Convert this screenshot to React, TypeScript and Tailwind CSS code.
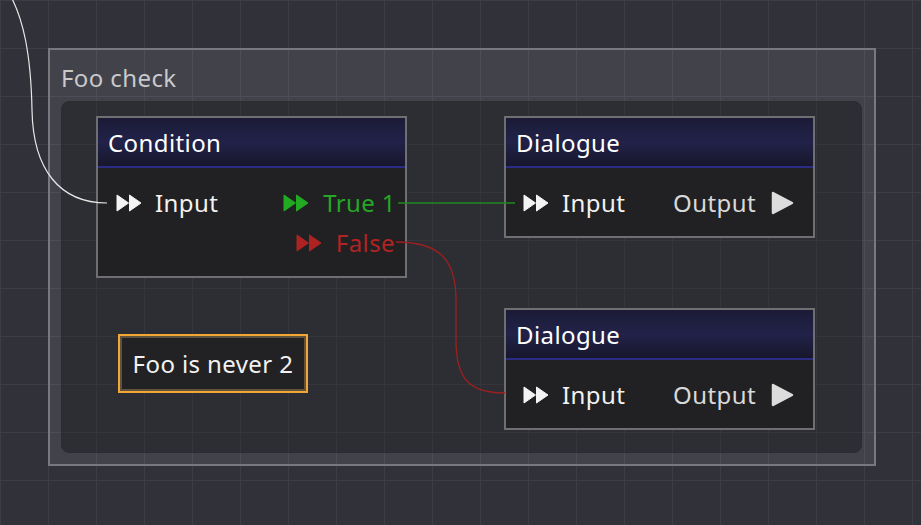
import React from "react";

type Tone = "white" | "green" | "red";

const toneText: Record<Tone, string> = {
  white: "text-[#f2f2f2]",
  green: "text-[#26a626]",
  red: "text-[#b02424]",
};

const toneFill: Record<Tone, string> = {
  white: "#f4f4f4",
  green: "#22aa22",
  red: "#ad2323",
};

function FastIcon({ tone }: { tone: Tone }) {
  return (
    <svg width="26" height="18" viewBox="0 0 26 18" className="shrink-0">
      <path d="M1 1 L12.5 9 L1 17 Z M13.5 1 L25 9 L13.5 17 Z" fill={toneFill[tone]} strokeLinejoin="round" stroke={toneFill[tone]} strokeWidth="1" />
    </svg>
  );
}

function PlayIcon() {
  return (
    <svg width="23" height="24" viewBox="0 0 23 24" className="shrink-0">
      <path d="M2 2 L21 12 L2 22 Z" fill="#dddddd" stroke="#dddddd" strokeWidth="2.5" strokeLinejoin="round" />
    </svg>
  );
}

function Header({ title }: { title: string }) {
  return (
    <div className="h-[50px] flex items-center pl-[10px] pt-[2px] border-b-2 border-[#2c2c86] bg-[linear-gradient(to_bottom,#1b1b36_0%,#22224a_50%,#1d1d3c_72%,#17172c_100%)] text-white">
      {title}
    </div>
  );
}

function InPort() {
  return (
    <div className="flex items-center gap-[13px]">
      <FastIcon tone="white" />
      <span className="text-[#f2f2f2]">Input</span>
    </div>
  );
}

function Dialogue({ className }: { className: string }) {
  return (
    <div className={`absolute w-[311px] border-2 border-[#6f6f73] bg-[#212123] ${className}`}>
      <Header title="Dialogue" />
      <div className="pt-[15px] pb-[13px]">
        <div className="h-10 flex items-center justify-between pl-[17px] pr-[19px]">
          <InPort />
          <div className="flex items-center gap-[15px]">
            <span className="text-[#d9d9d9]">Output</span>
            <PlayIcon />
          </div>
        </div>
      </div>
    </div>
  );
}

function OutRow({ label, tone, pr }: { label: string; tone: Tone; pr: string }) {
  return (
    <div className={`flex items-center gap-[14px] ${pr}`}>
      <FastIcon tone={tone} />
      <span className={toneText[tone]}>{label}</span>
    </div>
  );
}

export default function App() {
  return (
    <div className="relative w-[921px] h-[525px] overflow-hidden bg-[#303139] bg-[linear-gradient(to_right,#3c3d45_1px,transparent_1px),linear-gradient(to_bottom,#3c3d45_1px,transparent_1px)] bg-size-[48px_48px] font-['Noto_Sans',sans-serif] text-[24px] tracking-[0.4px] leading-none">
      {/* frame */}
      <div className="absolute left-[48px] top-[48px] w-[828px] h-[418px] border-2 border-[#78787e] bg-white/[0.085] flex flex-col">
        <div className="h-[51px] flex items-center pl-[11px] pt-[4px] text-[#c9c9cc]">Foo check</div>
        <div className="flex-1 ml-[11px] mr-[12px] mb-[11px] rounded-lg bg-black/30 border border-[#2c2c31]" />
      </div>

      {/* condition */}
      <div className="absolute left-[96px] top-[116px] w-[311px] border-2 border-[#6f6f73] bg-[#212123]">
        <Header title="Condition" />
        <div className="pt-[15px] pb-[13px] flex flex-col">
          <div className="h-10 flex items-center justify-between pl-[18px]">
            <InPort />
            <OutRow label="True 1" tone="green" pr="pr-[9px]" />
          </div>
          <div className="h-10 flex items-center justify-end">
            <OutRow label="False" tone="red" pr="pr-[10px]" />
          </div>
        </div>
      </div>

      <Dialogue className="left-[504px] top-[116px]" />
      <Dialogue className="left-[504px] top-[308px]" />

      {/* comment */}
      <div className="absolute left-[118px] top-[334px] w-[190px] h-[59px] border-2 border-[#f2a634]">
        <div className="w-full h-full border-2 border-[#5f523f] bg-[#222224] flex items-center justify-center text-[#f2f2f2]">
          Foo is never 2
        </div>
      </div>

      {/* connections */}
      <svg className="absolute inset-0 pointer-events-none" width="921" height="525">
        <path d="M4 -15 C25 15, 31 60, 32 110 C33 170, 60 203, 107 203" stroke="#e8e8e8" strokeWidth="1.2" fill="none" />
        <path d="M398 203 L515 203" stroke="#1f8a1f" strokeWidth="1.5" fill="none" />
        <path d="M396 242 C440 242, 456 260, 456 300 L456 340 C456 380, 470 393, 505 393" stroke="#9e1f1f" strokeWidth="1.3" fill="none" />
      </svg>
    </div>
  );
}
